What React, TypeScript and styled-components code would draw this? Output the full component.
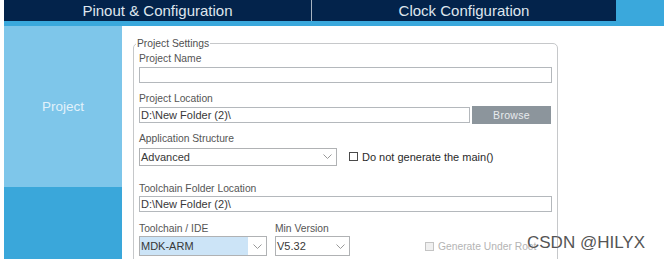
import React from "react";
import styled, { createGlobalStyle } from "styled-components";

const GlobalStyle = createGlobalStyle`
  html, body {
    margin: 0;
    padding: 0;
    background: #fff;
  }
  body {
    font-family: "Liberation Sans", Arial, sans-serif;
  }
`;

const Page = styled.div`
  position: relative;
  width: 664px;
  height: 259px;
  padding-left: 4px;
  box-sizing: border-box;
  display: flex;
  flex-direction: column;
  overflow: hidden;
  background: #fff;
`;

const TabBar = styled.div`
  display: flex;
  flex-shrink: 0;
  height: 21px;
  background: #3aa8dc;
`;

const Tab = styled.div<{ $width: number; $divider?: boolean }>`
  width: ${(p) => p.$width}px;
  background: #03234b;
  color: #dfe6ee;
  font-size: 15px;
  line-height: 21px;
  text-align: center;
  border-left: ${(p) => (p.$divider ? "1px solid #a7b3c0" : "none")};
`;

const Strip = styled.div`
  flex-shrink: 0;
  height: 5px;
  background: #3aa8dc;
`;

const Body = styled.div`
  flex: 1;
  display: flex;
  min-height: 0;
`;

const Sidebar = styled.div`
  width: 118px;
  display: flex;
  flex-direction: column;
`;

const SideItem = styled.div<{ $active?: boolean }>`
  display: flex;
  align-items: center;
  justify-content: center;
  height: ${(p) => (p.$active ? "161px" : "auto")};
  flex: ${(p) => (p.$active ? "none" : "1")};
  background: ${(p) => (p.$active ? "#7ec6ea" : "#3aa7da")};
  color: #e2f2fb;
  font-size: 13.5px;
`;

const Content = styled.div`
  flex: 1;
  padding: 11px 0 0 11px;
`;

const GroupBox = styled.fieldset`
  width: 425px;
  height: 260px;
  box-sizing: border-box;
  margin: 0;
  padding: 0 5px;
  border: 1px solid #c6c8ca;
  border-radius: 5px;
`;

const Legend = styled.legend`
  margin-left: -3px;
  padding: 0 1px;
  font-size: 10.3px;
  line-height: 13px;
  color: #505050;
`;

const Field = styled.div<{ $top: number; $gap: number }>`
  display: flex;
  flex-direction: column;
  gap: ${(p) => p.$gap}px;
  margin-top: ${(p) => p.$top}px;
`;

const Label = styled.label`
  display: block;
  font-size: 10.3px;
  line-height: 13px;
  color: #555;
  white-space: nowrap;
`;

const Row = styled.div<{ $gap: number; $align?: string }>`
  display: flex;
  align-items: ${(p) => p.$align || "center"};
  gap: ${(p) => p.$gap}px;
`;

const TextInput = styled.input<{ $width: number }>`
  width: ${(p) => p.$width}px;
  height: 16px;
  box-sizing: border-box;
  margin: 0;
  padding: 0 1px;
  border: 1px solid #b4b8bc;
  border-radius: 0;
  background: #fff;
  font-family: "Liberation Sans", Arial, sans-serif;
  font-size: 11px;
  color: #383838;
  outline: none;
`;

const BrowseButton = styled.button`
  width: 79px;
  height: 18px;
  margin: 0;
  padding: 0;
  border: none;
  background: #8c959c;
  color: #e8ebee;
  font-family: "Liberation Sans", Arial, sans-serif;
  font-size: 10.5px;
  letter-spacing: 0.3px;
`;

const SelectBox = styled.div<{ $width: number; $height: number }>`
  display: flex;
  width: ${(p) => p.$width}px;
  height: ${(p) => p.$height}px;
  box-sizing: border-box;
  border: 1px solid #b0b2b4;
  background: #fff;
`;

const SelectValue = styled.div<{ $selected?: boolean }>`
  flex: 1;
  display: flex;
  align-items: center;
  padding-left: 1px;
  background: ${(p) => (p.$selected ? "#cce4f7" : "#fff")};
  font-size: 11px;
  color: #383838;
`;

const Chevron = styled.div`
  width: 18px;
  display: flex;
  align-items: center;
  justify-content: center;
`;

const CheckLabel = styled.label<{ $disabled?: boolean }>`
  display: flex;
  align-items: center;
  gap: 4px;
  height: 19px;
  font-size: ${(p) => (p.$disabled ? "10.3px" : "11px")};
  color: ${(p) => (p.$disabled ? "#b4b4b4" : "#2a2a2a")};
  white-space: nowrap;
`;

const CheckBox = styled.span<{ $disabled?: boolean }>`
  width: 9px;
  height: 9px;
  box-sizing: border-box;
  border: 1px solid ${(p) => (p.$disabled ? "#c4c4c4" : "#4a4a4a")};
  background: ${(p) => (p.$disabled ? "#f0f0f0" : "#fff")};
`;

const Watermark = styled.div`
  position: absolute;
  left: 527px;
  top: 233px;
  font-size: 17px;
  line-height: 20px;
  color: #555;
  text-shadow: 0 0 1px #fff;
  white-space: nowrap;
`;

function Select({ value, width, height, selected }: { value: string; width: number; height: number; selected?: boolean }) {
  return (
    <SelectBox $width={width} $height={height}>
      <SelectValue $selected={selected}>{value}</SelectValue>
      <Chevron>
        <svg width="9" height="5" viewBox="0 0 9 5">
          <polyline points="0.5,0.5 4.5,4.5 8.5,0.5" fill="none" stroke="#999" strokeWidth="1" />
        </svg>
      </Chevron>
    </SelectBox>
  );
}

export default function App() {
  return (
    <>
      <GlobalStyle />
      <Page>
        <TabBar>
          <Tab $width={307}>Pinout &amp; Configuration</Tab>
          <Tab $width={304} $divider>
            Clock Configuration
          </Tab>
        </TabBar>
        <Strip />
        <Body>
          <Sidebar>
            <SideItem $active>Project</SideItem>
            <SideItem />
          </Sidebar>
          <Content>
            <GroupBox>
              <Legend>Project Settings</Legend>
              <Field $top={2} $gap={2}>
                <Label>Project Name</Label>
                <TextInput $width={413} defaultValue="" readOnly />
              </Field>
              <Field $top={9} $gap={1}>
                <Label>Project Location</Label>
                <Row $gap={2}>
                  <TextInput $width={331} defaultValue="D:\New Folder (2)\" readOnly />
                  <BrowseButton>Browse</BrowseButton>
                </Row>
              </Field>
              <Field $top={8} $gap={2}>
                <Label>Application Structure</Label>
                <Row $gap={12}>
                  <Select value="Advanced" width={198} height={18} />
                  <CheckLabel>
                    <CheckBox />
                    Do not generate the main()
                  </CheckLabel>
                </Row>
              </Field>
              <Field $top={16} $gap={1}>
                <Label>Toolchain Folder Location</Label>
                <TextInput $width={413} defaultValue="D:\New Folder (2)\" readOnly />
              </Field>
              <Row $gap={8} $align="flex-end">
                <Field $top={10} $gap={1}>
                  <Label>Toolchain / IDE</Label>
                  <Select value="MDK-ARM" width={128} height={20} selected />
                </Field>
                <Field $top={10} $gap={1}>
                  <Label>Min Version</Label>
                  <Select value="V5.32" width={75} height={20} />
                </Field>
                <CheckLabel $disabled style={{ marginLeft: 67 }}>
                  <CheckBox $disabled />
                  Generate Under Root
                </CheckLabel>
              </Row>
            </GroupBox>
          </Content>
        </Body>
        <Watermark>CSDN @HILYX</Watermark>
      </Page>
    </>
  );
}
